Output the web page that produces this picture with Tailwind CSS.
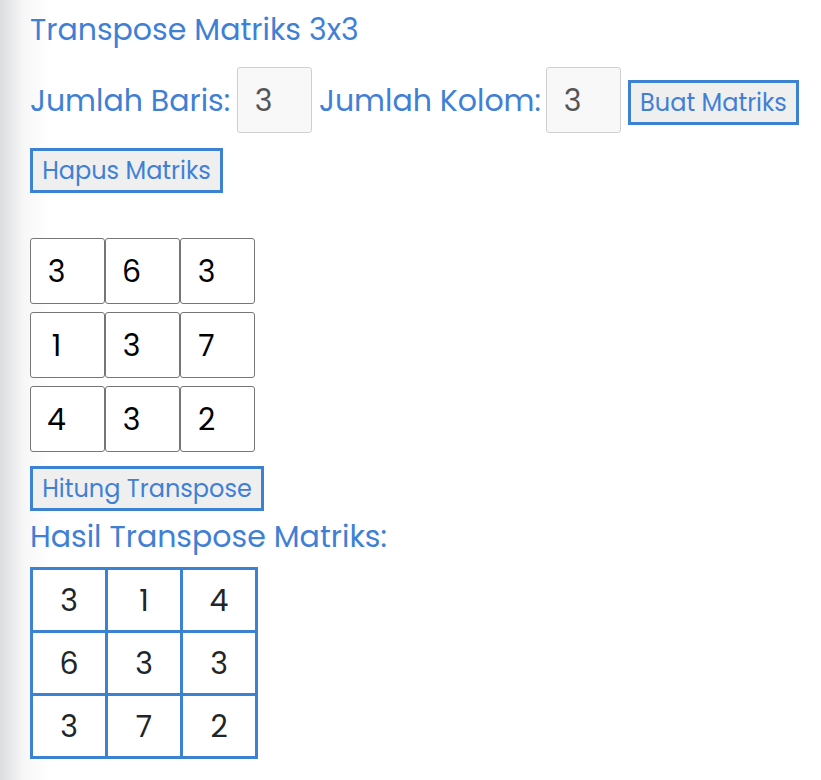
<!DOCTYPE html>
<html lang="id">
<head>
<meta charset="utf-8">
<meta name="viewport" content="width=device-width, initial-scale=1">
<title>Transpose Matriks 3x3</title>
<script src="https://cdn.jsdelivr.net/npm/@tailwindcss/browser@4"></script>
</head>
<body class="min-h-screen bg-linear-to-r from-[#dcdde0] from-0% via-[#f7f7f8] via-[24px] to-white to-[52px] pl-[30px] pr-5 pt-[7px] pb-5 font-[Poppins,Inter,sans-serif] text-[30px] leading-[45px] text-[#3f80d6]">
<main>
  <h1>Transpose Matriks 3x3</h1>
  <form class="mt-[15px] flex flex-wrap items-center gap-y-[15px]">
    <label for="baris" class="min-w-[207px]">Jumlah Baris:</label>
    <input id="baris" type="text" value="3" disabled class="mr-[7px] h-[66px] w-[75px] rounded-[3px] border border-[#cfcfcf] bg-[#f8f8f8] pt-[2px] pr-[38px] pl-4 text-center text-[#545454]">
    <label for="kolom" class="min-w-[227px]">Jumlah Kolom:</label>
    <input id="kolom" type="text" value="3" disabled class="mr-[7px] h-[66px] w-[75px] rounded-[3px] border border-[#cfcfcf] bg-[#f8f8f8] pt-[2px] pr-[38px] pl-4 text-center text-[#545454]">
    <button type="button" class="mt-1 h-[45px] min-w-[171px] border-3 border-[#3c82d2] bg-[#efefef] px-2 pt-px text-2xl">Buat Matriks</button>
    <button type="button" class="h-[45px] min-w-[193px] border-3 border-[#3c82d2] bg-[#efefef] px-2 pt-px text-2xl">Hapus Matriks</button>
  </form>
  <form class="mt-[45px]">
    <div class="grid w-max grid-cols-3 gap-y-2 text-black">
      <input aria-label="Baris 1 kolom 1" value="3" class="h-[66px] w-[75px] rounded-[3px] border border-[#767676] bg-white pt-px pr-[38px] pl-4 text-center">
      <input aria-label="Baris 1 kolom 2" value="6" class="h-[66px] w-[75px] rounded-[3px] border border-[#767676] bg-white pt-px pr-[38px] pl-4 text-center">
      <input aria-label="Baris 1 kolom 3" value="3" class="h-[66px] w-[75px] rounded-[3px] border border-[#767676] bg-white pt-px pr-[38px] pl-4 text-center">
      <input aria-label="Baris 2 kolom 1" value="1" class="h-[66px] w-[75px] rounded-[3px] border border-[#767676] bg-white pt-px pr-[38px] pl-4 text-center">
      <input aria-label="Baris 2 kolom 2" value="3" class="h-[66px] w-[75px] rounded-[3px] border border-[#767676] bg-white pt-px pr-[38px] pl-4 text-center">
      <input aria-label="Baris 2 kolom 3" value="7" class="h-[66px] w-[75px] rounded-[3px] border border-[#767676] bg-white pt-px pr-[38px] pl-4 text-center">
      <input aria-label="Baris 3 kolom 1" value="4" class="h-[66px] w-[75px] rounded-[3px] border border-[#767676] bg-white pt-px pr-[38px] pl-4 text-center">
      <input aria-label="Baris 3 kolom 2" value="3" class="h-[66px] w-[75px] rounded-[3px] border border-[#767676] bg-white pt-px pr-[38px] pl-4 text-center">
      <input aria-label="Baris 3 kolom 3" value="2" class="h-[66px] w-[75px] rounded-[3px] border border-[#767676] bg-white pt-px pr-[38px] pl-4 text-center">
    </div>
    <button type="button" class="mt-[14px] block h-[45px] min-w-[234px] border-3 border-[#3c82d2] bg-[#efefef] px-2 pt-px text-2xl">Hitung Transpose</button>
  </form>
  <h2 class="mt-[3px]">Hasil Transpose Matriks:</h2>
  <table class="mt-2 border-collapse bg-white text-center text-[#212529]">
    <tbody>
      <tr class="h-[63px]"><td class="w-[75px] border-3 border-[#3c82d2] p-0">3</td><td class="w-[75px] border-3 border-[#3c82d2] p-0">1</td><td class="w-[75px] border-3 border-[#3c82d2] p-0">4</td></tr>
      <tr class="h-[63px]"><td class="border-3 border-[#3c82d2] p-0">6</td><td class="border-3 border-[#3c82d2] p-0">3</td><td class="border-3 border-[#3c82d2] p-0">3</td></tr>
      <tr class="h-[63px]"><td class="border-3 border-[#3c82d2] p-0">3</td><td class="border-3 border-[#3c82d2] p-0">7</td><td class="border-3 border-[#3c82d2] p-0">2</td></tr>
    </tbody>
  </table>
</main>
</body>
</html>
